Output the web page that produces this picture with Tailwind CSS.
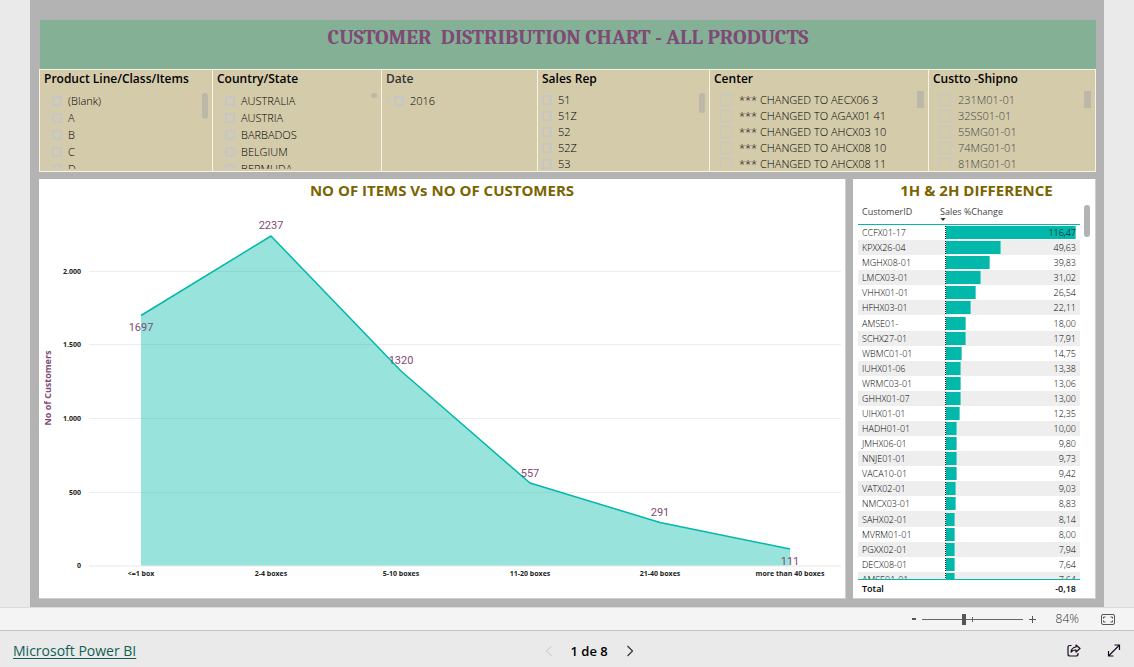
<!DOCTYPE html>
<html lang="en">
<head>
<meta charset="utf-8">
<title>Customer Distribution Chart</title>
<script src="https://cdn.jsdelivr.net/npm/@tailwindcss/browser@4"></script>
</head>
<body class="flex min-h-screen flex-col bg-[#eaeaea] font-['Open_Sans',sans-serif] text-[#222]">

<main class="mx-[30px] flex-1 bg-[#b3b3b3] pt-5 pr-2 pb-2 pl-[9px]">
  <header class="ml-px h-[49px] bg-[#84b196] pt-1 text-center">
    <h1 class="font-[Cambria,Caladea,'Noto_Serif','Liberation_Serif',serif] text-[21px] leading-[26px] font-bold whitespace-pre text-[#7f4a75]">CUSTOMER  DISTRIBUTION CHART - ALL PRODUCTS</h1>
  </header>

  <section id="slicers" class="grid h-[103px] grid-cols-[173fr_169fr_156fr_172fr_219fr_167fr] border-y border-l border-[#f7f4e6] bg-[#d4cbaa]"></section>

  <div class="mt-[7px] grid grid-cols-[807fr_243fr] gap-[7px]">
    <section class="border-r border-b border-[#cfcfcf] bg-white">
      <h2 class="pb-px text-center text-[15px] leading-[22px] font-bold text-[#7a6400]">NO OF ITEMS Vs NO OF CUSTOMERS</h2>
      <svg class="block w-full" viewBox="0 0 806 396" role="img" aria-label="Number of items versus number of customers">
        <g stroke="#ededed" stroke-width="1">
          <path d="M50 69.5H802M50 142.5H802M50 216.5H802M50 290.5H802"/>
          <path d="M50 364H802" stroke="#f3f3f3" stroke-width="2"/>
        </g>
        <path d="M102 113L232 34L362 169L491 281L621 320.500L751 347V363.500H102Z" fill="#01b8aa" fill-opacity=".4"/>
        <path d="M102 113.500L232 34L362 169L491 281L621 320.500L751 347" fill="none" stroke="#01b8aa" stroke-width="1.500" stroke-linejoin="round"/>
        <g class="text-[7px] font-bold" fill="#222" text-anchor="end">
          <text x="42" y="72">2.000</text>
          <text x="42" y="145">1.500</text>
          <text x="42" y="219">1.000</text>
          <text x="42" y="293">500</text>
          <text x="42" y="366">0</text>
        </g>
        <g class="text-[7px] font-bold" fill="#222" text-anchor="middle">
          <text x="102" y="374">&lt;=1 box</text>
          <text x="232" y="374">2-4 boxes</text>
          <text x="362" y="374">5-10 boxes</text>
          <text x="491" y="374">11-20 boxes</text>
          <text x="621" y="374">21-40 boxes</text>
          <text x="751" y="374">more than 40 boxes</text>
        </g>
        <g class="font-['Roboto',sans-serif] text-[11px]" fill="#7f4a75" text-anchor="middle">
          <text x="102" y="129">1697</text>
          <text x="232" y="27">2237</text>
          <text x="362" y="162">1320</text>
          <text x="491" y="275">557</text>
          <text x="621" y="314">291</text>
          <text x="751" y="363">111</text>
        </g>
        <text class="text-[9px] font-bold" transform="translate(12 186) rotate(-90)" fill="#7f4a75" text-anchor="middle">No of Customers</text>
      </svg>
    </section>

    <section class="border-r border-b border-[#cfcfcf] bg-white pl-[5px]">
      <h2 class="pb-px text-center text-[15px] leading-[22px] font-bold text-[#7a6400]">1H &amp; 2H DIFFERENCE</h2>
      <div class="flex h-[394px] gap-1">
        <div class="h-full flex-1 overflow-hidden">
          <table class="h-[402px] w-full table-fixed border-separate border-spacing-0 text-[9px] leading-[13px] font-light text-black">
            <thead>
              <tr class="h-[23px] text-left align-top">
                <th scope="col" class="w-[82px] border-b border-[#01b8aa] p-0 pt-[3px] pl-1 align-top font-normal text-[#444]">CustomerID</th>
                <th scope="col" class="border-b border-[#01b8aa] p-0 pt-[3px] align-top font-normal text-[#444]">
                  <span class="block leading-[13px]">Sales %Change</span>
                  <svg class="block" width="6" height="4" viewBox="0 0 6 4" aria-hidden="true"><path d="M0.500 0H5.500L3 3Z" fill="#333"/></svg>
                </th>
              </tr>
            </thead>
            <tbody id="rows"></tbody>
            <tfoot class="sticky bottom-0 bg-white">
              <tr class="h-[17px]">
                <th scope="row" class="border-t border-[#01b8aa] p-0 pl-1 text-left font-semibold">Total</th>
                <td class="border-t border-[#01b8aa] p-0 pr-1 text-right font-semibold">-0,18</td>
              </tr>
            </tfoot>
          </table>
        </div>
        <div class="mt-[3px] mr-[5px] h-8 w-1.5 rounded-full bg-[#b3b3b3]"></div>
      </div>
    </section>
  </div>
</main>

<div class="flex h-6 items-center justify-end border-y border-t-[#dcdcdc] border-b-[#c4c4c4] bg-[#f4f4f4] pr-[19px] text-[#333]">
  <button type="button" aria-label="Zoom out" class="flex size-4 items-center justify-center"><svg width="6" height="10" viewBox="0 0 6 10"><path d="M1 5H5" stroke="#555" stroke-width="2"/></svg></button>
  <div class="relative h-[15px] w-[101px]">
    <div class="absolute top-[7px] h-px w-full bg-[#666]"></div>
    <div class="absolute top-[5px] left-[50px] h-[5px] w-px bg-[#666]"></div>
    <input type="range" min="0" max="100" value="42" aria-label="Zoom level" class="absolute inset-0 m-0 w-full appearance-none bg-transparent [&::-webkit-slider-thumb]:h-[11px] [&::-webkit-slider-thumb]:w-1 [&::-webkit-slider-thumb]:appearance-none [&::-webkit-slider-thumb]:bg-[#555]">
  </div>
  <button type="button" aria-label="Zoom in" class="ml-0.5 flex size-4 items-center justify-center"><svg width="9" height="9" viewBox="0 0 9 9"><path d="M1 4.500H8M4.500 1V8" stroke="#555"/></svg></button>
  <span class="mr-[22px] ml-[15px] text-[12px] font-light">84%</span>
  <button type="button" aria-label="Fit to page" class="flex items-center"><svg width="14" height="11" viewBox="0 0 14 11" fill="none" stroke="#555"><rect x=".5" y=".5" width="13" height="10" rx="1.500"/><path d="M2.500 4.500V3H4.500M9.500 3H11.500V4.500M11.500 6.500V8H9.500M4.500 8H2.500V6.500"/></svg></button>
</div>

<footer class="flex h-9 items-center justify-between pt-[3px] pr-[13px] pl-[13px]">
  <div class="text-[14px] leading-5"><a href="#" class="text-[#0f5f57] underline underline-offset-2">Microsoft Power BI</a></div>
  <nav class="ml-[-25px] flex items-center justify-center gap-[18px] text-[13px] leading-5 font-semibold text-black" aria-label="Pages">
    <button type="button" aria-label="Previous page" class="flex"><svg width="8" height="12" viewBox="0 0 8 12" fill="none" stroke="#c3c3c3"><path d="M6.500 1L1.500 6L6.500 11"/></svg></button>
    <span>1 de 8</span>
    <button type="button" aria-label="Next page" class="flex"><svg width="8" height="12" viewBox="0 0 8 12" fill="none" stroke="#333" stroke-width="1.200"><path d="M1.500 1L6.500 6L1.500 11"/></svg></button>
  </nav>
  <div class="flex items-center justify-end gap-[26px]">
    <button type="button" aria-label="Share"><svg class="block" width="14" height="13" viewBox="0 0 14 13" fill="none" stroke="#1a0c20" stroke-width="1.200"><path d="M4.500 1.500H3Q1 1.500 1 3.500V10Q1 12 3 12H9Q11 12 11 10V9"/><path d="M9 1L13 4.500L9 8V6Q6 5.800 4 8Q4.500 3.500 9 3Z" stroke-linejoin="round"/></svg></button>
    <button type="button" aria-label="Full screen"><svg class="block" width="14" height="13" viewBox="0 0 14 13" fill="none" stroke="#1a0c20" stroke-width="1.200"><path d="M1.500 12L12.500 1M7.500 1H12.500V6M1.500 7V12H6.500"/></svg></button>
  </div>
</footer>

<script>
const slicers = [
  { title: 'Product Line/Class/Items', tree: true, thumb: 'mt-[23px] mr-1 h-[26px] w-1.5 rounded-full', items: ['(Blank)', 'A', 'B', 'C', 'D'] },
  { title: 'Country/State', tree: true, thumb: 'mt-[23px] mr-1 h-[5px] w-1.5 rounded-full', items: ['AUSTRALIA', 'AUSTRIA', 'BARBADOS', 'BELGIUM', 'BERMUDA'] },
  { title: 'Date', tree: true, light: true, items: ['2016'] },
  { title: 'Sales Rep', thumb: 'mt-[23px] mr-1 h-5 w-1.5 rounded-full', items: ['51', '51Z', '52', '52Z', '53'] },
  { title: 'Center', wide: true, thumb: 'mt-[21px] mr-1 h-[17px] w-[7px]', items: ['*** CHANGED TO AECX06 3', '*** CHANGED TO AGAX01 41', '*** CHANGED TO AHCX03 10', '*** CHANGED TO AHCX08 10', '*** CHANGED TO AHCX08 11'] },
  { title: 'Custto -Shipno', wide: true, pale: true, thumb: 'mt-[21px] mr-1 h-[17px] w-[7px]', items: ['231M01-01', '32SS01-01', '55MG01-01', '74MG01-01', '81MG01-01'] },
];
document.getElementById('slicers').innerHTML = slicers.map(s => `
  <fieldset class="flex h-[101px] min-w-0 border-r border-[#f7f4e6] pl-1">
    <div class="min-w-0 flex-1">
      <h3 class="h-[22px] text-[12px] leading-[18px] whitespace-nowrap ${s.light ? 'font-semibold text-[#333]' : 'font-semibold text-black'}">${s.title}</h3>
      <ul class="h-[77px] overflow-hidden text-[11px] ${s.pale ? 'text-[#444]' : 'text-black'} ${s.wide ? 'pl-1.5' : ''}">
        ${s.items.map(t => `
        <li class="flex items-center ${s.tree ? 'h-[17px]' : 'h-4'}">
          ${s.tree ? '<button type="button" aria-label="Expand" class="mr-1 flex w-1"><svg width="4" height="5" viewBox="0 0 4 5"><path d="M1 0L4 2.500L1 5Z" fill="#c8c8c6"/></svg></button>' : ''}
          <label class="flex items-center whitespace-nowrap ${s.wide ? 'gap-[7px]' : 'gap-1.5'}">
            <input type="checkbox" class="appearance-none border-[#c6c6c8] ${s.wide ? 'size-3 border' : 'size-[10px] border-2'}">
            <span class="leading-4 font-light">${t}</span>
          </label>
        </li>`).join('')}
      </ul>
    </div>
    ${s.thumb ? `<div class="shrink-0 bg-[#bbb8aa] ${s.thumb}"></div>` : ''}
  </fieldset>`).join('');

const rows = [
  ['CCFX01-17', '116,47'], ['KPXX26-04', '49,63'], ['MGHX08-01', '39,83'], ['LMCX03-01', '31,02'],
  ['VHHX01-01', '26,54'], ['HFHX03-01', '22,11'], ['AMSE01-', '18,00'], ['SCHX27-01', '17,91'],
  ['WBMC01-01', '14,75'], ['IUHX01-06', '13,38'], ['WRMC03-01', '13,06'], ['GHHX01-07', '13,00'],
  ['UIHX01-01', '12,35'], ['HADH01-01', '10,00'], ['JMHX06-01', '9,80'], ['NNJE01-01', '9,73'],
  ['VACA10-01', '9,42'], ['VATX02-01', '9,03'], ['NMCX03-01', '8,83'], ['SAHX02-01', '8,14'],
  ['MVRM01-01', '8,00'], ['PGXX02-01', '7,94'], ['DECX08-01', '7,64'], ['AMSE01-01', '7,64'],
];
document.getElementById('rows').innerHTML = rows.map(([id, v]) => `
  <tr class="even:bg-[#eeeeee]">
    <td class="h-[15px] p-0 pl-1">${id}</td>
    <td class="h-[15px] p-0 pr-1 pl-[5px]">
      <div class="grid border-l border-dotted border-[#222]">
        <div class="col-start-1 row-start-1 h-[13px] border-r border-[#5fd3ca] bg-[#01b8aa]" style="width:${parseFloat(v.replace(',', '.')) / 1.1647}%"></div>
        <span class="col-start-1 row-start-1 text-right">${v}</span>
      </div>
    </td>
  </tr>`).join('');
</script>
</body>
</html>
